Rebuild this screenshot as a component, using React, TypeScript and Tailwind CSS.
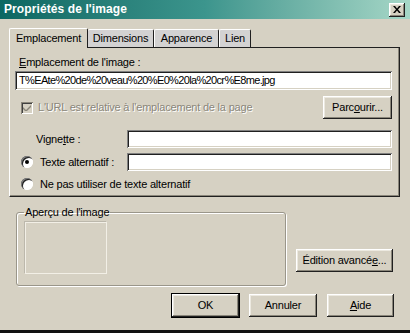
import React from 'react';

const raised =
  'bg-[#d6d1c3] shadow-[inset_-1px_-1px_#202020,inset_1px_1px_#ffffff,inset_-2px_-2px_#8a867a,inset_2px_2px_#ece9e0]';
const sunken =
  'bg-white shadow-[inset_1px_1px_#808080,inset_-1px_-1px_#ffffff,inset_2px_2px_#202020,inset_-2px_-2px_#d6d1c3]';

const Btn: React.FC<{ w: string; children: React.ReactNode; def?: boolean }> = ({ w, children, def }) => (
  <div
    className={`${w} h-[23px] flex items-center justify-center ${raised} ${
      def ? 'outline outline-1 outline-black -outline-offset-0' : ''
    }`}
  >
    {children}
  </div>
);

const Radio: React.FC<{ on?: boolean }> = ({ on }) => (
  <div className="w-[12px] h-[12px] rounded-full bg-white shadow-[inset_1px_1px_#808080,inset_2px_2px_#202020,inset_-1px_-1px_#ffffff] flex items-center justify-center">
    {on && <div className="w-[4px] h-[4px] rounded-full bg-black" />}
  </div>
);

export default function App() {
  return (
    <div className="w-[410px] h-[333px] bg-[#d6d1c3] flex flex-col font-['Liberation_Sans',Arial,sans-serif] text-[11px] leading-[13px] tracking-[-0.2px] text-black border-b-[3px] border-[#111] overflow-hidden">
      {/* title bar */}
      <div className="h-[19px] shrink-0 flex items-center justify-between pl-[4px] pr-[5px] bg-gradient-to-r from-[#0b6762] via-[#3c958d] to-[#a6d7c7]">
        <span className="text-white font-bold text-[12px] tracking-[0.1px]">Propriétés de l'image</span>
        <div className={`w-[16px] h-[14px] flex items-center justify-center ${raised}`}>
          <svg width="8" height="7" viewBox="0 0 8 7">
            <path d="M0 0h2l2 2.5L6 0h2L5 3.5 8 7H6L4 4.5 2 7H0l3-3.5z" fill="#000" />
          </svg>
        </div>
      </div>

      {/* tabs */}
      <div className="pl-[9px] pt-[8px] flex items-end h-[28px] shrink-0 relative z-10">
        <div className="w-[79px] h-[20px] -mb-px bg-[#d6d1c3] border-t border-l border-white border-r border-r-[#202020] rounded-t-[2px] flex items-center justify-center">
          Emplacement
        </div>
        <div className="w-[66px] h-[18px] bg-[#d3d2d2] border-t border-white border-r border-r-[#202020] rounded-t-[2px] flex items-center justify-center">
          Dimensions
        </div>
        <div className="w-[65px] h-[18px] bg-[#d3d2d2] border-t border-l border-white border-r border-r-[#202020] rounded-t-[2px] flex items-center justify-center">
          Apparence
        </div>
        <div className="w-[32px] h-[18px] bg-[#d3d2d2] border-t border-l border-white border-r border-r-[#202020] rounded-t-[2px] flex items-center justify-center">
          Lien
        </div>
      </div>

      {/* panel */}
      <div className="ml-[9px] w-[391px] h-[150px] shrink-0 border border-[#202020] border-l-white shadow-[inset_-1px_-1px_#8a867a] pt-[8px] px-[5px]">
        <div className="ml-[4px] h-[13px]">
          <span className="underline">E</span>mplacement de l'image :
        </div>
        <div className={`mt-[2px] h-[19px] w-[377px] ${sunken} flex items-center pl-[4px] tracking-[-0.65px]`}>
          T%EAte%20de%20veau%20%E0%20la%20cr%E8me.jpg
        </div>
        <div className="mt-[6px] w-[377px] h-[23px] flex items-center justify-between">
          <div className="flex items-center ml-[6px] text-[#8a867a]">
            <div className="w-[12px] h-[12px] bg-[#d6d1c3] shadow-[inset_1px_1px_#8a867a,inset_-1px_-1px_#ffffff,inset_2px_2px_#404040] flex items-center justify-center">
              <svg width="8" height="7" viewBox="0 0 8 7">
                <path d="M0 3l3 3 5-5V3L3 8 0 5z" fill="#8a867a" />
              </svg>
            </div>
            <span className="ml-[5px] [text-shadow:1px_1px_#ffffff]">L'URL est relative à l'emplacement de la page</span>
          </div>
          <Btn w="w-[69px]">
            <span>
              Parc<span className="underline">o</span>urir...
            </span>
          </Btn>
        </div>
        <div className="mt-[11px] w-[377px] h-[18px] flex items-center">
          <span className="ml-[21px] w-[91px]">
            Vigne<span className="underline">t</span>te :
          </span>
          <div className={`flex-1 h-[18px] ${sunken}`} />
        </div>
        <div className="mt-[5px] w-[377px] h-[18px] flex items-center">
          <div className="ml-[6px]">
            <Radio on />
          </div>
          <span className="ml-[7px] w-[87px]">Texte alternatif :</span>
          <div className={`flex-1 h-[18px] ${sunken}`} />
        </div>
        <div className="mt-[5px] w-[377px] h-[16px] flex items-center">
          <div className="ml-[6px]">
            <Radio />
          </div>
          <span className="ml-[7px]">Ne pas utiliser de texte alternatif</span>
        </div>
      </div>

      {/* lower area */}
      <div className="mt-[2px] flex items-end h-[87px] shrink-0">
        <fieldset className="ml-[16px] w-[270px] h-[80px] border border-[#9a968a] rounded-[3px] shadow-[inset_1px_1px_#ffffff,1px_1px_#ffffff] px-[8px]">
          <legend className="px-[1px] -ml-[1px] leading-[13px]">Aperçu de l'image</legend>
          <div className="mt-[3px] w-[82px] h-[52px] border border-[#f2efe6] shadow-[-1px_-1px_#bcb8ac]" />
        </fieldset>
        <div className="ml-[10px] mb-[14px]">
          <Btn w="w-[97px]">
            <span>
              Édition avancé<span className="underline">e</span>...
            </span>
          </Btn>
        </div>
      </div>

      {/* buttons */}
      <div className="mt-[8px] flex pl-[172px] gap-[10px]">
        <Btn w="w-[67px]" def>
          OK
        </Btn>
        <Btn w="w-[68px]">Annuler</Btn>
        <Btn w="w-[67px]">
          <span>
            <span className="underline">A</span>ide
          </span>
        </Btn>
      </div>
    </div>
  );
}
